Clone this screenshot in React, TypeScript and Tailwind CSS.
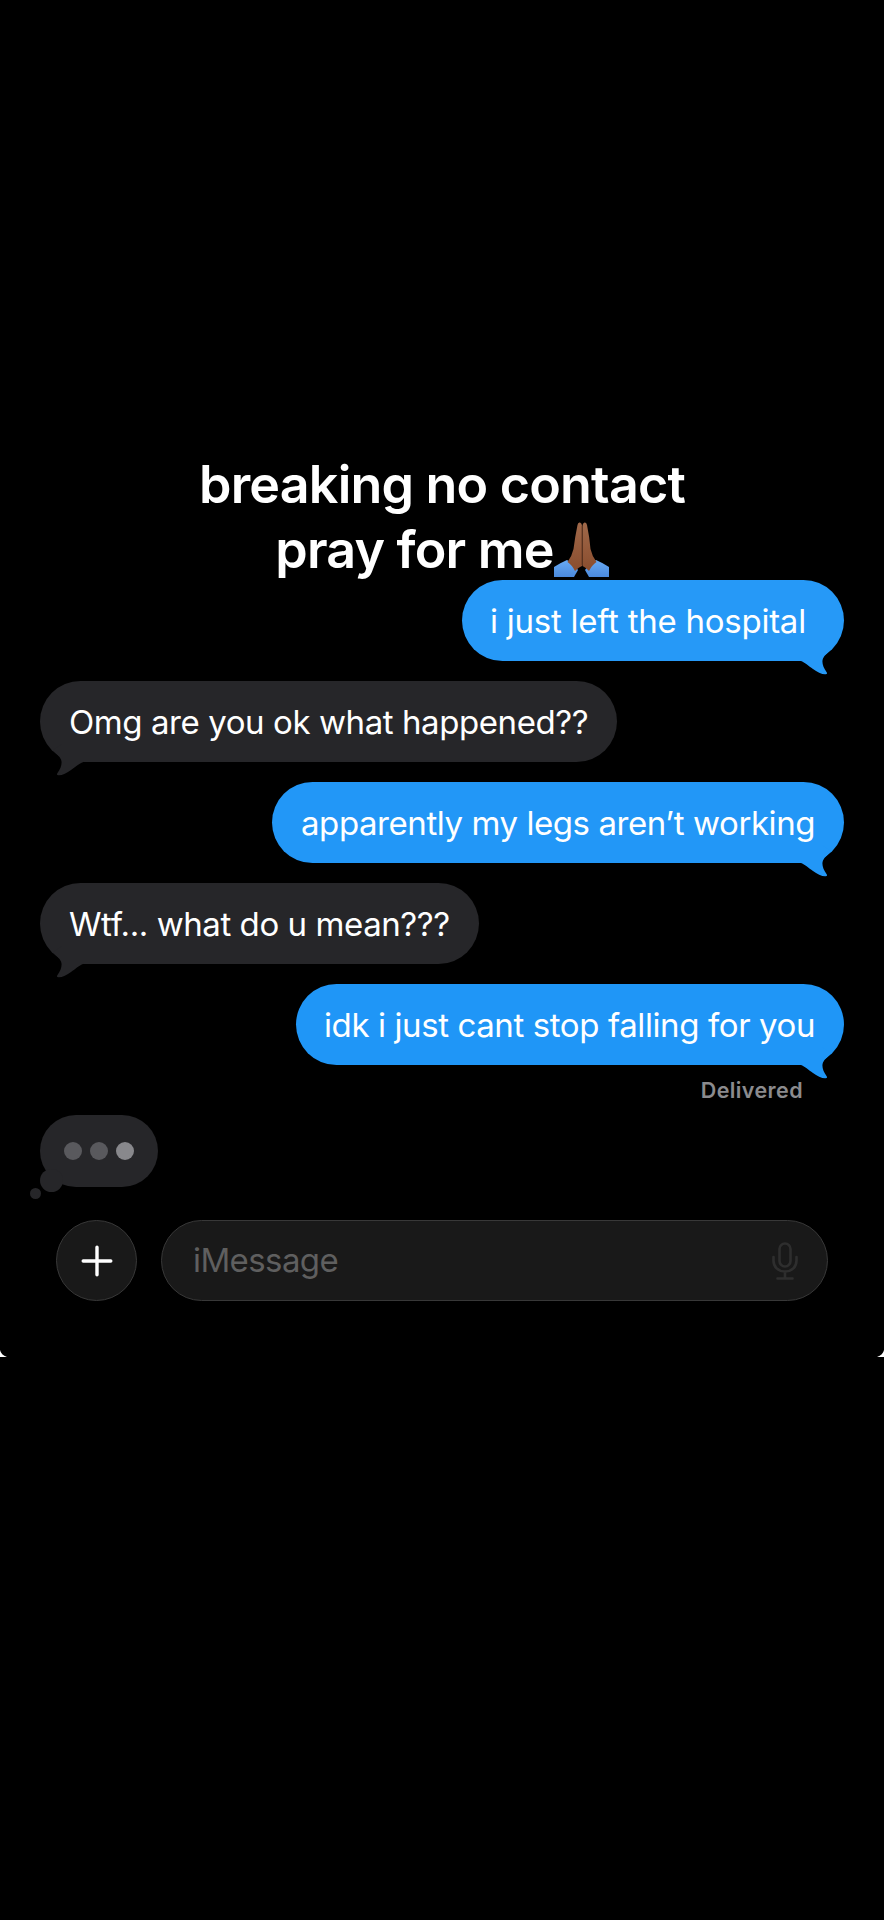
import React from "react";

interface Message {
  id: number;
  text: string;
  sent: boolean;
  bubble: string; // width, colour and padding
  label: string; // letter spacing
}

const messages: Message[] = [
  {
    id: 1,
    text: "i just left the hospital",
    sent: true,
    bubble: "w-[382px] text-[#2699f7] pl-[28px]",
    label: "tracking-[-0.25px]",
  },
  {
    id: 2,
    text: "Omg are you ok what happened??",
    sent: false,
    bubble: "w-[577px] text-[#262629] pl-[29px]",
    label: "tracking-[-0.42px]",
  },
  {
    id: 3,
    text: "apparently my legs aren’t working",
    sent: true,
    bubble: "w-[572px] text-[#2297f7] pl-[29px]",
    label: "tracking-[-0.43px]",
  },
  {
    id: 4,
    text: "Wtf... what do u mean???",
    sent: false,
    bubble: "w-[439px] text-[#262629] pl-[29px]",
    label: "tracking-[-0.43px]",
  },
  {
    id: 5,
    text: "idk i just cant stop falling for you",
    sent: true,
    bubble: "w-[548px] text-[#1f96f7] pl-[28px]",
    label: "tracking-[-0.4px]",
  },
];

const PrayingHands = () => (
  <svg
    className="h-[55px] w-[55px]"
    viewBox="0 0 55 55"
    role="img"
    aria-label="praying hands"
  >
    <defs>
      <linearGradient id="skin" x1="0" y1="0" x2="0" y2="1">
        <stop offset="0" stopColor="#a0694a" />
        <stop offset="1" stopColor="#8a4d2e" />
      </linearGradient>
      <linearGradient id="cuff" x1="0" y1="0" x2="0" y2="1">
        <stop offset="0" stopColor="#69aaf3" />
        <stop offset="1" stopColor="#4a8ade" />
      </linearGradient>
    </defs>
    <path d="M0 45 Q6 41 13 38 Q20 42 24 48 L20 55 H0 Z" fill="url(#cuff)" />
    <path d="M55 45 Q49 41 42 38 Q35 42 31 48 L35 55 H55 Z" fill="url(#cuff)" />
    <path
      d="M23.5 3 Q24 0 26 0.5 Q28 1 28 4 V44 Q25 45 21 49 Q18 43 13.5 40 Q18 34 19.500 27 Q21 15 23.500 3 Z"
      fill="url(#skin)"
    />
    <path
      d="M33 3 Q32.5 0 30.5 0.5 Q28.5 1 28.5 4 V44 Q31 45 35 49 Q38 43 42.5 40 Q38 34 36.5 27 Q35.5 15 33 3 Z"
      fill="url(#skin)"
    />
    <path d="M28.2 4 V43" stroke="#5e3521" strokeWidth="1.2" />
  </svg>
);

// Curl under the bubble corner, mirrored for received messages
const Tail = ({ sent }: { sent: boolean }) => (
  <svg
    viewBox="0 0 34 32"
    className={
      sent
        ? "absolute right-[10px] bottom-[-14px] h-[32px] w-[34px]"
        : "absolute bottom-[-14px] left-[10px] h-[32px] w-[34px] -scale-x-100"
    }
  >
    <path
      d="M-2 17.5 C4 18 8 23 13 26 C17 29 22 31.5 25.5 31.3 Q28 31 26.5 29 C23 24.5 21.5 19 23 15.5 C24.5 12 28 10 31 6 L22 0 H-2 Z"
      fill="currentColor"
    />
  </svg>
);

const Bubble = ({ message }: { message: Message }) => (
  <div
    className={`relative flex h-[81px] items-center rounded-full bg-current ${message.bubble} ${
      message.sent ? "self-end" : "self-start"
    }`}
  >
    <Tail sent={message.sent} />
    <span
      className={`relative pt-[2px] text-[33px] whitespace-nowrap text-white ${message.label}`}
    >
      {message.text}
    </span>
  </div>
);

const TypingIndicator = () => (
  <div className="relative ml-[40px] flex h-[72px] w-[118px] items-center justify-center gap-[8px] rounded-full bg-[#262629] pr-px">
    <div className="absolute bottom-[-5px] left-0 size-[23px] rounded-full bg-[#262629]" />
    <div className="absolute bottom-[-12px] left-[-10px] size-[11px] rounded-full bg-[#262629]" />
    <div className="size-[18px] rounded-full bg-[#59595d]" />
    <div className="size-[18px] rounded-full bg-[#59595d]" />
    <div className="size-[18px] rounded-full bg-[#88888c]" />
  </div>
);

const InputBar = () => (
  <div className="mt-[33px] flex gap-[24px] pl-[56px]">
    <button
      className="flex size-[81px] items-center justify-center rounded-full border border-[#383838] bg-[#191919]"
      aria-label="Add attachment"
    >
      <svg viewBox="0 0 32 32" className="size-[32px]">
        <path
          d="M16 2.2V29.8M2.2 16H29.8"
          stroke="white"
          strokeWidth="3.4"
          strokeLinecap="round"
        />
      </svg>
    </button>
    <div className="flex h-[81px] w-[667px] items-center justify-between rounded-full border border-[#383838] bg-[#191919] pr-[29px] pl-[31px]">
      <span className="text-[33px] tracking-[-0.6px] text-[#5f5f5f]">
        iMessage
      </span>
      <svg
        viewBox="0 0 26 38"
        className="h-[38px] w-[26px]"
        fill="none"
        stroke="#2e2e2e"
        strokeWidth="2.6"
        strokeLinecap="round"
      >
        <rect x="7.5" y="1.5" width="11" height="23" rx="5.5" />
        <path d="M1.5 15V18.5C1.5 25 6 29.5 13 29.5S24.5 25 24.5 18.5V15M13 29.5V36.5M5.5 36.5H20.5" />
      </svg>
    </div>
  </div>
);

export default function App() {
  return (
    <div className="h-[1920px] w-[884px] overflow-hidden bg-black font-['Inter',sans-serif]">
      <main className="relative flex h-[1357px] flex-col pt-[452px]">
        <h1 className="flex flex-col items-center text-[52px] leading-[65px] font-semibold tracking-[-0.8px] whitespace-nowrap text-white">
          <span>breaking no contact</span>
          <span className="flex items-center">
            pray for me
            <PrayingHands />
          </span>
        </h1>

        <div className="mt-[-2px] flex flex-col gap-[20px] pr-[40px] pl-[40px]">
          {messages.map((message) => (
            <Bubble key={message.id} message={message} />
          ))}
        </div>

        <p className="mt-[10px] mb-[10px] mr-[81px] h-[30px] text-right text-[21.5px] leading-[30px] font-semibold tracking-[0.4px] text-[#8b8b8e]">
          Delivered
        </p>

        <TypingIndicator />
        <InputBar />

        {/* Rounded screen corners */}
        <svg viewBox="0 0 7 7" className="absolute bottom-0 left-0 size-[7px]">
          <path d="M0 0Q1 5 7 7H0Z" fill="white" />
        </svg>
        <svg viewBox="0 0 7 7" className="absolute right-0 bottom-0 size-[7px]">
          <path d="M7 0Q6 5 0 7H7Z" fill="white" />
        </svg>
      </main>
    </div>
  );
}
